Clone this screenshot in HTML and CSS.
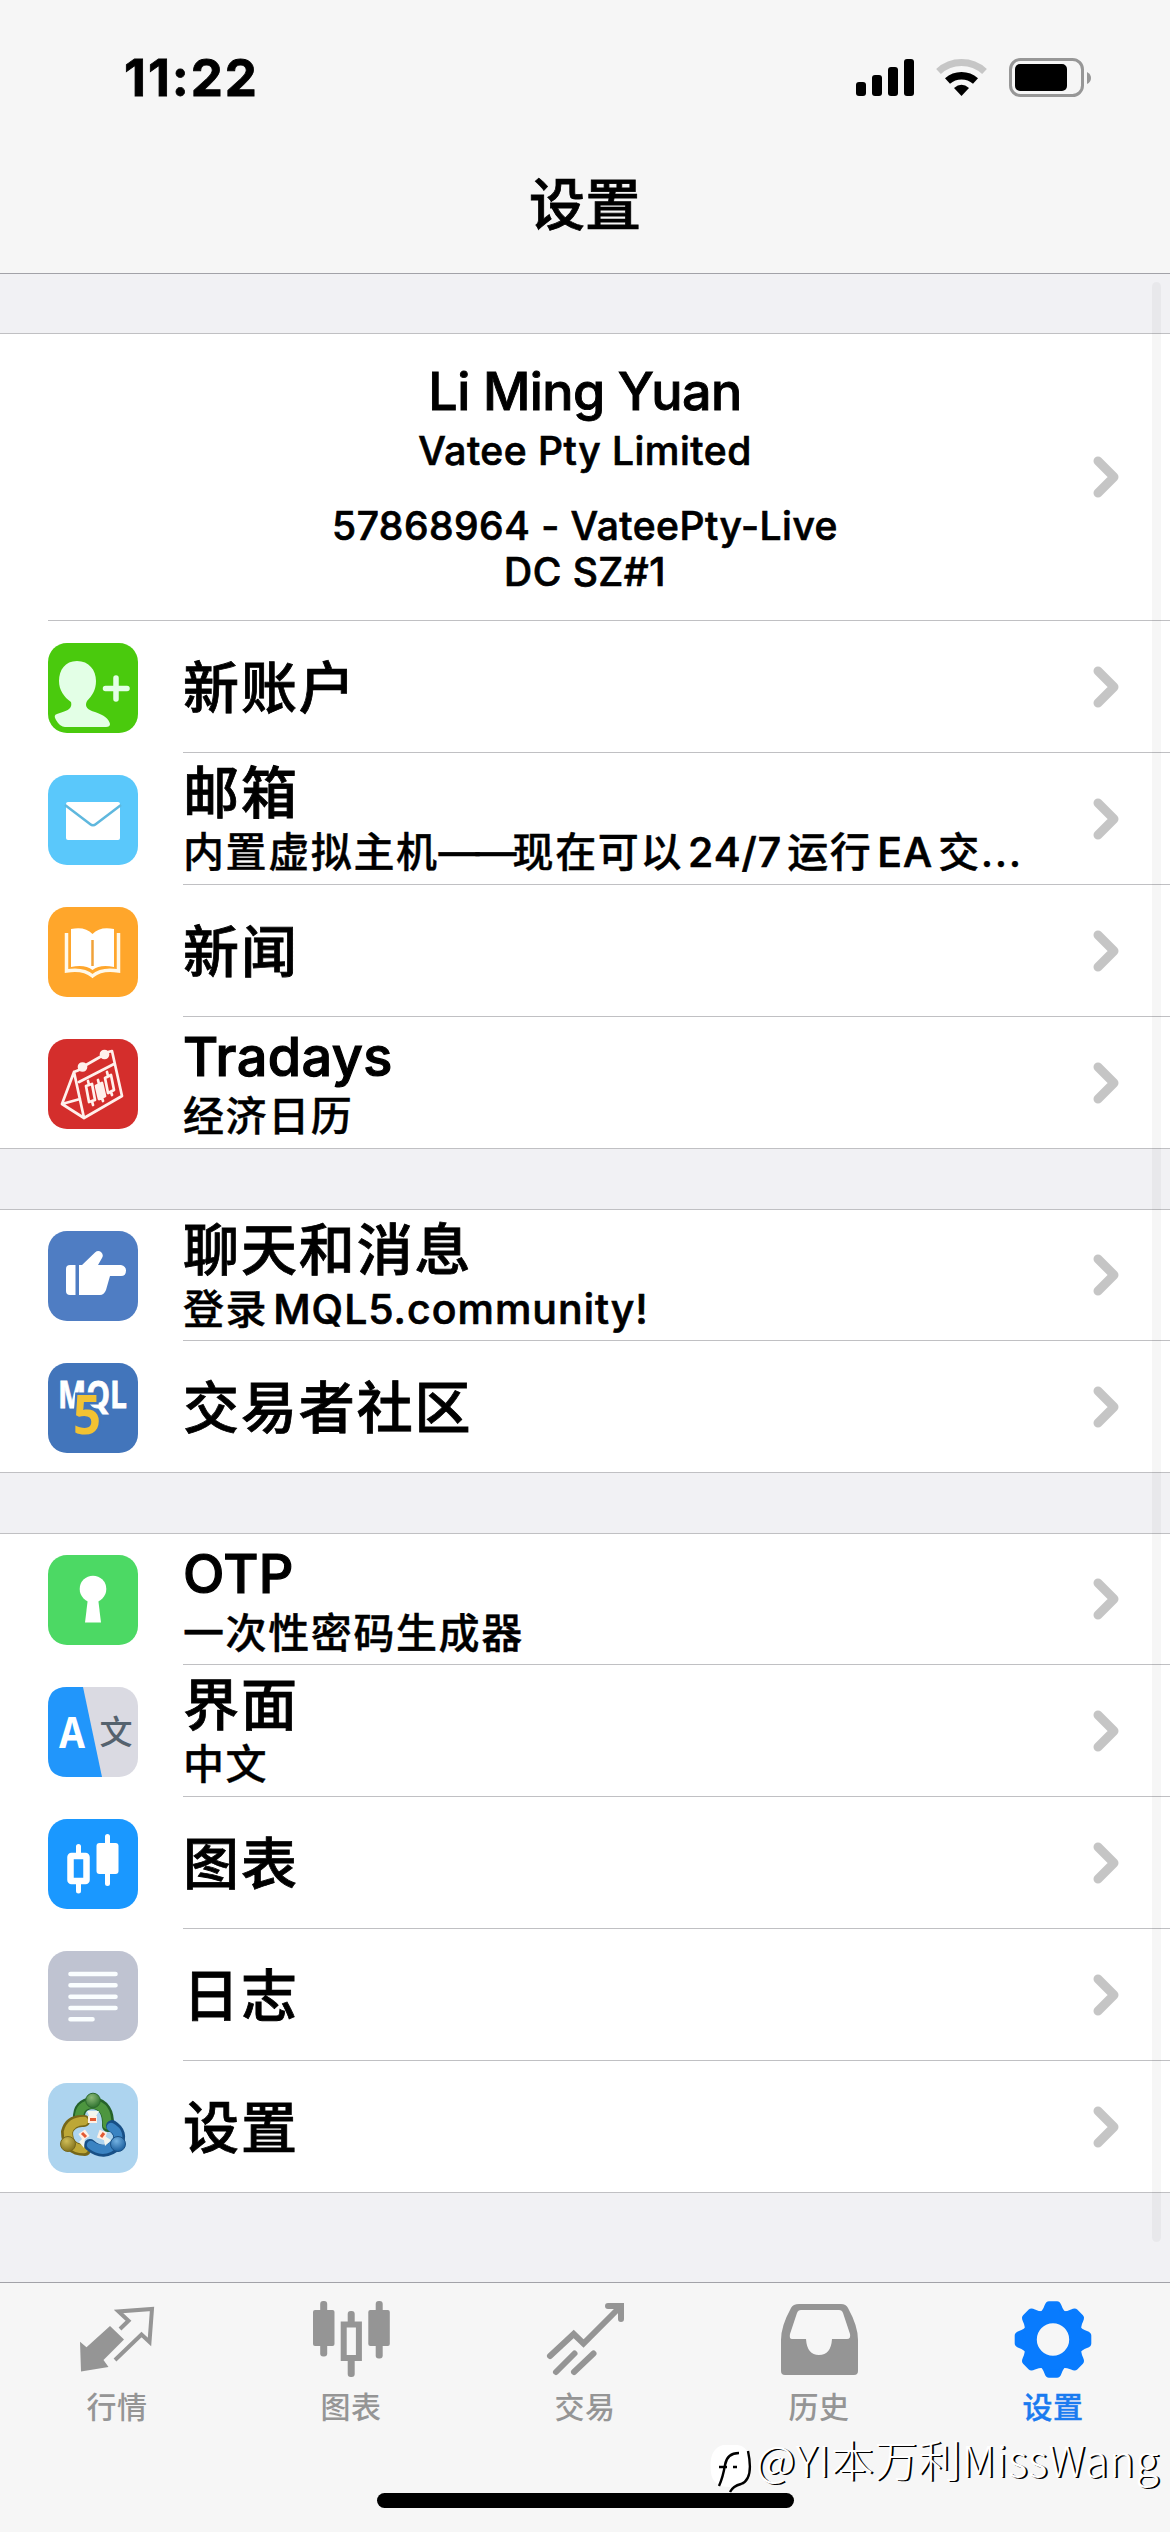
FILE: index.html
```html
<!DOCTYPE html>
<html lang="zh-CN">
<head>
    <meta charset="UTF-8">
    <meta name="viewport" content="width=device-width, initial-scale=1.0">
    <title>设置</title>
    <link rel="stylesheet" href="styles.css">
</head>
<body>
    <svg class="defs" width="0" height="0">
        <symbol id="chevron" viewBox="0 0 26 42">
            <path d="M5 5 L21 21 L5 37" fill="none" stroke="#c5c5c5" stroke-width="9" stroke-linecap="round" stroke-linejoin="round"/>
        </symbol>
    </svg>

    <header class="header">
        <div class="status-bar">
            <div class="time">11:22</div>
            <svg class="status-icons" viewBox="856 56 236 44">
                <rect x="856" y="82" width="10" height="14" rx="3"/>
                <rect x="872" y="75" width="10" height="21" rx="3"/>
                <rect x="888" y="67" width="10" height="29" rx="3"/>
                <rect x="904" y="59" width="10" height="37" rx="3"/>
                <path d="M938.5 71.500 A34 34 0 0 1 984.500 71.500" fill="none" stroke="#c6c6c6" stroke-width="7"/>
                <path d="M947.500 81 A21 21 0 0 1 975.500 81" fill="none" stroke="#000" stroke-width="7.500"/>
                <path d="M954 88 Q961.500 81.500 969 88 L961.500 96 Z"/>
                <rect x="1010.500" y="59.500" width="72" height="36" rx="10" fill="none" stroke="#979797" stroke-width="3"/>
                <rect x="1015" y="64" width="52" height="27" rx="5"/>
                <path d="M1087 72 Q1091 74 1091 78 Q1091 82 1087 84 Z" fill="#979797"/>
            </svg>
        </div>
        <h1>设置</h1>
    </header>

    <main class="content">
        <div class="group">
            <div class="row account">
                <div class="account-info">
                    <div class="name">Li Ming Yuan</div>
                    <div class="company">Vatee Pty Limited</div>
                    <div class="server">57868964 - VateePty-Live</div>
                    <div class="dc">DC SZ#1</div>
                </div>
                <svg class="chevron"><use href="#chevron"/></svg>
            </div>
            <div class="row">
                <svg class="icon" viewBox="0 0 90 90">
                    <rect width="90" height="90" rx="19" fill="#4aca0d"/>
                    <path d="M29 18 C41 18 48 27 48 38 C48 47 44 53 39 58 C36 64 40 67 47 69 C56 72 61 76 62 81 Q62 84 58 84 H17 Q12 84 8 77 Q5 72 9 71 C17 68 25 67 23 59 C16 54 11 47 11 38 C11 27 17 18 29 18 Z" fill="#e3ffe6"/>
                    <path d="M68 35 V56 M57.500 45.500 H79" stroke="#e3ffe6" stroke-width="5.500" stroke-linecap="round"/>
                </svg>
                <div class="cell">
                    <div class="text"><div class="title">新账户</div></div>
                    <svg class="chevron"><use href="#chevron"/></svg>
                </div>
            </div>
            <div class="row">
                <svg class="icon" viewBox="0 0 90 90">
                    <rect width="90" height="90" rx="19" fill="#5ac8fb"/>
                    <rect x="18" y="27" width="54" height="38" rx="2" fill="#fff"/>
                    <path d="M17 30 L42 49 Q45 51.500 48 49 L73 30" fill="none" stroke="#5fb8de" stroke-width="2.500"/>
                </svg>
                <div class="cell">
                    <div class="text">
                        <div class="title">邮箱</div>
                        <div class="subtitle">内置虚拟主机<span class="dash">——</span>现在可以<span class="latin">24/7</span>运行<span class="latin">EA</span>交...</div>
                    </div>
                    <svg class="chevron"><use href="#chevron"/></svg>
                </div>
            </div>
            <div class="row">
                <svg class="icon" viewBox="0 0 90 90">
                    <rect width="90" height="90" rx="19" fill="#ffa62b"/>
                    <path d="M23 22 Q37 19 44.500 27 Q52 19 66 22 V60 Q52 57 44.500 63 Q37 57 23 60 Z" fill="#fff"/>
                    <path d="M44.500 33 V59" stroke="#f0a23a" stroke-width="2.500"/>
                    <path d="M18.500 26 V64 Q35 61 44.500 69 Q54 61 70.500 64 V26" fill="none" stroke="#fff8e8" stroke-width="3.500"/>
                </svg>
                <div class="cell">
                    <div class="text"><div class="title">新闻</div></div>
                    <svg class="chevron"><use href="#chevron"/></svg>
                </div>
            </div>
            <div class="row">
                <svg class="icon" viewBox="0 0 90 90">
                    <rect width="90" height="90" rx="19" fill="#d42e2c"/>
                    <g fill="none" stroke="#fff0ec" stroke-width="2.700" stroke-linejoin="round" stroke-linecap="round">
                        <path d="M31 31 L26 33 L36 79 L74 57 L64 12 L60 13 M38 26 L52 18 M31 43 L66 25 M26 33 L14 65 L36 79 M14 65 L32 60"/>
                        <circle cx="34.500" cy="28" r="3.500" fill="#fff0ec"/>
                        <circle cx="56.500" cy="15.500" r="3.500" fill="#fff0ec"/>
                        <path d="M38 47 L44 45 L47 61 L41 63 Z M41 46 L40 42 M44 62 L45 66"/>
                        <path d="M48 47 L54 44 L57 57 L51 60 Z M51 45 L50 41 M54 59 L55 62" fill="#fff0ec"/>
                        <path d="M57 39 L63 36 L66 51 L60 54 Z M60 37 L59 33 M63 53 L64 56"/>
                    </g>
                </svg>
                <div class="cell">
                    <div class="text">
                        <div class="title latin-title">Tradays</div>
                        <div class="subtitle">经济日历</div>
                    </div>
                    <svg class="chevron"><use href="#chevron"/></svg>
                </div>
            </div>
        </div>

        <div class="group">
            <div class="row">
                <svg class="icon" viewBox="0 0 90 90">
                    <rect width="90" height="90" rx="19" fill="#4f7dc3"/>
                    <path d="M22 34 H27.500 V64 H22 Q18 64 18 60 V38 Q18 34 22 34 Z" fill="#fff"/>
                    <path d="M31 34 H34 L47 21.500 Q50 19 53 21 Q56 24 54 27 L50 34 H73 Q78 35 78 39.500 Q78 45 73 45 H62 L58 59 Q56 64 52 64 H31 Z" fill="#fff"/>
                </svg>
                <div class="cell">
                    <div class="text">
                        <div class="title">聊天和消息</div>
                        <div class="subtitle">登录<span class="latin">MQL5.community!</span></div>
                    </div>
                    <svg class="chevron"><use href="#chevron"/></svg>
                </div>
            </div>
            <div class="row">
                <svg class="icon" viewBox="0 0 90 90">
                    <rect width="90" height="90" rx="19" fill="#4275bb"/>
                    <text class="mql" x="10" y="45" textLength="69" lengthAdjust="spacingAndGlyphs">MQL</text>
                    <text class="mql-five" x="25" y="71" textLength="28" lengthAdjust="spacingAndGlyphs">5</text>
                </svg>
                <div class="cell">
                    <div class="text"><div class="title">交易者社区</div></div>
                    <svg class="chevron"><use href="#chevron"/></svg>
                </div>
            </div>
        </div>

        <div class="group">
            <div class="row">
                <svg class="icon" viewBox="0 0 90 90">
                    <rect width="90" height="90" rx="19" fill="#4cd964"/>
                    <circle cx="45" cy="34" r="13.300" fill="#fff"/>
                    <path d="M40 43 H50 L53 67.500 H37 Z" fill="#fff"/>
                </svg>
                <div class="cell">
                    <div class="text">
                        <div class="title latin-title">OTP</div>
                        <div class="subtitle">一次性密码生成器</div>
                    </div>
                    <svg class="chevron"><use href="#chevron"/></svg>
                </div>
            </div>
            <div class="row">
                <svg class="icon" viewBox="0 0 90 90">
                    <rect width="90" height="90" rx="19" fill="#dadae2"/>
                    <path d="M19 0 H35 L54 90 H19 Q0 90 0 71 V19 Q0 0 19 0 Z" fill="#2196fb"/>
                    <text class="lang-a" x="11" y="61" textLength="26" lengthAdjust="spacingAndGlyphs">A</text>
                    <text class="lang-zh" x="68" y="57">文</text>
                </svg>
                <div class="cell">
                    <div class="text">
                        <div class="title">界面</div>
                        <div class="subtitle">中文</div>
                    </div>
                    <svg class="chevron"><use href="#chevron"/></svg>
                </div>
            </div>
            <div class="row">
                <svg class="icon" viewBox="0 0 90 90">
                    <rect width="90" height="90" rx="19" fill="#1a98ff"/>
                    <g stroke="#fff" stroke-width="5" stroke-linecap="round">
                        <path d="M30.500 27.500 V35 M30.500 64 V72 M59.500 17.500 V64.500"/>
                        <rect x="48.500" y="24" width="22" height="31" rx="3" fill="#fff" stroke="none"/>
                    </g>
                    <rect x="22.500" y="37" width="16" height="25" rx="1" fill="none" stroke="#fff" stroke-width="6.500"/>
                </svg>
                <div class="cell">
                    <div class="text"><div class="title">图表</div></div>
                    <svg class="chevron"><use href="#chevron"/></svg>
                </div>
            </div>
            <div class="row">
                <svg class="icon" viewBox="0 0 90 90">
                    <rect width="90" height="90" rx="19" fill="#bfc3d1"/>
                    <path d="M22.500 23 H67.500 M22.500 34.300 H67.500 M22.500 45.700 H67.500 M22.500 57 H67.500 M22.500 68.300 H44.500" stroke="#fafeff" stroke-width="4.600" stroke-linecap="round"/>
                </svg>
                <div class="cell">
                    <div class="text"><div class="title">日志</div></div>
                    <svg class="chevron"><use href="#chevron"/></svg>
                </div>
            </div>
            <div class="row">
                <svg class="icon" viewBox="0 0 90 90">
                    <defs>
                        <radialGradient id="green" cx=".4" cy=".3" r=".7"><stop offset="0" stop-color="#8dba78"/><stop offset="1" stop-color="#2f7330"/></radialGradient>
                        <radialGradient id="gold" cx=".4" cy=".3" r=".7"><stop offset="0" stop-color="#cfbd58"/><stop offset="1" stop-color="#84741e"/></radialGradient>
                        <radialGradient id="blue" cx=".4" cy=".3" r=".7"><stop offset="0" stop-color="#74b2e2"/><stop offset="1" stop-color="#1c5f9e"/></radialGradient>
                    </defs>
                    <rect width="90" height="90" rx="19" fill="#add4ef"/>
                    <g fill="none" stroke-linecap="round">
                        <path d="M31 36 Q30 21 45 20 Q61 22 60 43" stroke="#25622a" stroke-width="12"/>
                        <path d="M31 35 Q31 21 45 21 Q60 23 59 42" stroke="#4d963f" stroke-width="8.500"/>
                        <path d="M36 38 Q22 37 19 49 Q19 67 37 67" stroke="#766719" stroke-width="12"/>
                        <path d="M36 38 Q23 38 20 49 Q20 66 36 66" stroke="#bda736" stroke-width="8.500"/>
                        <path d="M64 43 Q75 50 69 61 Q56 74 42 62" stroke="#174f86" stroke-width="12"/>
                        <path d="M63 44 Q74 50 68 60 Q56 72 43 62" stroke="#3a83c2" stroke-width="8.500"/>
                    </g>
                    <path d="M39 28 H51 L47 35 H42 Z M31 59 L37 53 L36 65 Z M55 52 L63 57 L57 63 Z" fill="#f2f6ef"/>
                    <rect x="40" y="33" width="9" height="7" fill="#fff0e4"/>
                    <rect x="32" y="48" width="8" height="8" fill="#fff0e4" transform="rotate(-35 36 52)"/>
                    <rect x="50" y="48" width="8" height="8" fill="#fff0e4" transform="rotate(20 54 52)"/>
                    <path d="M42 36.500 H48 M34 50 L38 54 M53 54 L56 50" stroke="#e25a34" stroke-width="3"/>
                    <circle cx="45" cy="17.500" r="7.300" fill="url(#green)" stroke="#2d6a2e"/>
                    <circle cx="20" cy="61" r="7.500" fill="url(#gold)" stroke="#76681c"/>
                    <circle cx="70" cy="61" r="7.500" fill="url(#blue)" stroke="#1c5286"/>
                </svg>
                <div class="cell">
                    <div class="text"><div class="title">设置</div></div>
                    <svg class="chevron"><use href="#chevron"/></svg>
                </div>
            </div>
        </div>
        <div class="scrollbar"></div>
    </main>

    <nav class="tab-bar">
        <div class="tab">
            <svg viewBox="72 28 90 84">
                <path d="M110 56 L124 69.500 L103.500 90 L108.500 97 L81 101.500 L80 71.700 L86.500 77.300 Z" fill="#959595"/>
                <path d="M120 59 L128.500 50.700 L118.500 41.500 L152 39 L149.500 72 L141.500 64.500 L115 90" fill="none" stroke="#959595" stroke-width="4"/>
            </svg>
            <span>行情</span>
        </div>
        <div class="tab">
            <svg viewBox="306 28 90 84">
                <g fill="#959595">
                    <rect x="313" y="40" width="21.500" height="36" rx="2"/>
                    <rect x="368.300" y="40" width="21.500" height="36" rx="2"/>
                    <rect x="320.200" y="31" width="7" height="55.500" rx="3"/>
                    <rect x="375.700" y="31" width="7" height="57.500" rx="3"/>
                    <rect x="347.700" y="41" width="7" height="14" rx="3"/>
                    <rect x="347.700" y="88" width="7" height="19" rx="3"/>
                </g>
                <rect x="343.700" y="54.500" width="15.200" height="33.500" fill="none" stroke="#959595" stroke-width="6"/>
            </svg>
            <span>图表</span>
        </div>
        <div class="tab">
            <svg viewBox="540 28 90 84">
                <g fill="none" stroke="#959595" stroke-width="6" stroke-linecap="round">
                    <path d="M550 86 L573.700 64 L583.500 73.500 L620 37"/>
                    <path d="M608 36 H621 V49"/>
                    <path d="M556 102 L574.500 83.500 M574 102 L593.500 83.500"/>
                </g>
            </svg>
            <span>交易</span>
        </div>
        <div class="tab">
            <svg viewBox="774 28 90 84">
                <path fill-rule="evenodd" fill="#959595" d="M799 34 H841 Q846 34 848 38 Q858 56 858 70 V101 Q858 105 854 105 H785 Q781 105 781 101 V70 Q781 56 791 38 Q793 34 799 34 Z M801 40 Q798 40 797 43 L790 64 Q789 69 792 69 H806 Q807 85 819 85 Q831 85 832 69 H847 Q851 69 850 64 L843 43 Q842 40 839 40 Z"/>
            </svg>
            <span>历史</span>
        </div>
        <div class="tab active">
            <svg viewBox="-45 -41.500 90 84">
                <defs><path id="tooth" d="M-15 -25 Q-10 -29 -8.500 -34 Q-7 -38.300 -4 -38.300 H4 Q7 -38.300 8.500 -34 Q10 -29 15 -25 Z"/></defs>
                <g fill="#087bfe">
                    <use href="#tooth"/>
                    <use href="#tooth" transform="rotate(45)"/>
                    <use href="#tooth" transform="rotate(90)"/>
                    <use href="#tooth" transform="rotate(135)"/>
                    <use href="#tooth" transform="rotate(180)"/>
                    <use href="#tooth" transform="rotate(225)"/>
                    <use href="#tooth" transform="rotate(270)"/>
                    <use href="#tooth" transform="rotate(315)"/>
                </g>
                <circle r="23.200" fill="none" stroke="#087bfe" stroke-width="14"/>
            </svg>
            <span>设置</span>
        </div>
        <div class="home-indicator"></div>
        <div class="watermark">
            <svg viewBox="0 0 44 50">
                <path d="M14 2 H28 Q40 3 41 20 Q40 38 31 42 Q24 44 21 50 L21 44 Q4 44 2 30 Q-1 6 14 2 Z" fill="#fff"/>
                <path d="M39 8 Q45 36 32 41 Q24 43 21 49 M10 43 Q14 34 16 22 Q18 10 30 10 M10 24 H18 M24 24 H28" fill="none" stroke="#000" stroke-width="2.400"/>
            </svg>
            <span>@YI本万利MissWang</span>
        </div>
    </nav>
</body>
</html>
```
FILE: styles.css
```css
* {
    box-sizing: border-box;
}
body {
    margin: 0;
    width: 1170px;
    height: 2532px;
    display: flex;
    flex-direction: column;
    overflow: hidden;
    background-color: #f1f1f4;
    color: #000;
    font-family: Inter, "Noto Sans CJK SC", sans-serif;
    font-weight: 500;
}
.defs {
    position: absolute;
}
.header {
    height: 274px;
    background-color: #f6f6f6;
    border-bottom: 1px solid #a2a2a8;
}
.status-bar {
    display: flex;
    justify-content: space-between;
    align-items: flex-start;
    height: 156px;
    padding: 56px 78px 0 124px;
}
.time {
    font-size: 51px;
    font-weight: 700;
    line-height: 44px;
    letter-spacing: 1.9px;
    -webkit-text-stroke: 0.8px #000;
}
.status-icons {
    width: 236px;
    height: 44px;
}
h1 {
    margin: 0;
    text-align: center;
    font-size: 56px;
    font-weight: 500;
    line-height: 98px;
    -webkit-text-stroke: 0.8px #000;
}
.content {
    position: relative;
    flex: 1;
}
.group {
    margin-top: 59px;
    background-color: #fff;
    border-top: 1px solid #c0c0c3;
    border-bottom: 1px solid #c0c0c3;
}
.group + .group {
    margin-top: 60px;
}
.row {
    display: flex;
    height: 132px;
    padding-left: 48px;
}
.row:last-child,
.row:first-child {
    height: 131px;
}
.row.account {
    height: 287px;
    padding-left: 0;
    margin-left: 48px;
    padding-right: 51px;
    align-items: center;
    border-bottom: 1px solid #c0c0c3;
}
.account-info {
    flex: 1;
    height: 100%;
    padding-top: 26px;
    margin-left: 29px;
    text-align: center;
    font-size: 39px;
    line-height: 46px;
    letter-spacing: 0.5px;
    -webkit-text-stroke: 0.7px #000;
}
.name {
    font-size: 52px;
    line-height: 64px;
    letter-spacing: -0.6px;
    -webkit-text-stroke: 0.9px #000;
}
.company {
    margin-top: 4px;
    margin-bottom: 29px;
}
.icon {
    width: 90px;
    height: 90px;
    margin-top: 22px;
    flex: none;
}
.group + .group .row:first-child .icon {
    margin-top: 21px;
}
.cell {
    flex: 1;
    display: flex;
    align-items: center;
    margin-left: 45px;
    padding-right: 51px;
    border-bottom: 1px solid #c0c0c3;
}
.row:last-child .cell {
    border-bottom: none;
}
.text {
    flex: 1;
    padding-top: 3px;
    white-space: nowrap;
}
.title {
    font-size: 56px;
    line-height: 60px;
    letter-spacing: 1.9px;
    -webkit-text-stroke: 0.8px #000;
}
.latin-title {
    font-size: 54px;
    letter-spacing: 0.4px;
    -webkit-text-stroke: 1.2px #000;
}
.subtitle {
    margin-top: 4px;
    font-size: 41px;
    line-height: 50px;
    letter-spacing: 1.6px;
    -webkit-text-stroke: 0.4px #000;
}
.latin {
    margin: 0 5px;
    letter-spacing: 1px;
    -webkit-text-stroke: 0.7px #000;
}
.dash {
    letter-spacing: -4px;
}
.chevron {
    width: 26px;
    height: 42px;
    flex: none;
}
.scrollbar {
    position: absolute;
    top: 8px;
    right: 9px;
    width: 9px;
    height: 1960px;
    border-radius: 5px;
    background-color: rgba(0,0,0,0.035);
}
.tab-bar {
    position: relative;
    display: flex;
    height: 250px;
    background-color: #f6f6f6;
    border-top: 1px solid #a2a2a8;
}
.tab {
    flex: 1;
    display: flex;
    flex-direction: column;
    align-items: center;
    padding-top: 15px;
    color: #959595;
    font-size: 30px;
    line-height: 46px;
    letter-spacing: 0.5px;
}
.tab svg {
    width: 90px;
    height: 84px;
}
.tab span {
    margin-top: 2px;
}
.tab.active {
    color: #1a7bf0;
    -webkit-text-stroke: 0.4px currentColor;
}
.home-indicator {
    position: absolute;
    left: 377px;
    top: 210px;
    width: 417px;
    height: 15px;
    border-radius: 8px;
    background-color: #000;
}
.watermark {
    position: absolute;
    left: 709px;
    top: 151px;
    display: flex;
    align-items: flex-start;
    color: #fff;
    font-family: "Noto Sans CJK SC", sans-serif;
    font-size: 43px;
    font-weight: 300;
    line-height: 52px;
    letter-spacing: 0.7px;
    white-space: nowrap;
    text-shadow: 2px 1px 0 #000;
}
.watermark span {
    margin-top: -2px;
}
.watermark svg {
    width: 44px;
    height: 50px;
    margin-right: 3px;
    margin-top: 9px;
}
.mql {
    fill: #fff;
    font-family: "Open Sans", sans-serif;
    font-size: 38px;
    font-weight: 700;
    stroke: #fff;
    stroke-width: 0.8px;
}
.mql-five {
    fill: #f2c233;
    stroke: #4275bb;
    stroke-width: 5px;
    paint-order: stroke;
    font-family: "Open Sans", sans-serif;
    font-size: 53px;
    font-weight: 700;
}
.lang-a {
    fill: #fff;
    font-family: "Noto Sans", sans-serif;
    font-size: 43px;
    font-weight: 700;
}
.lang-zh {
    fill: #55626e;
    font-family: "Noto Sans CJK SC", sans-serif;
    font-size: 33px;
    font-weight: 500;
    text-anchor: middle;
}
```
